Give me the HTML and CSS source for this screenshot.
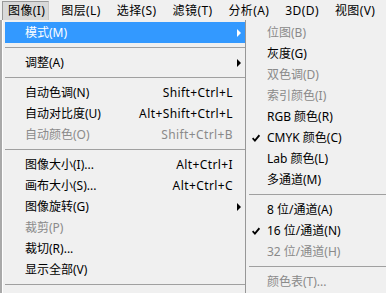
FILE: index.html
```html
<!DOCTYPE html>
<html>
<head>
<meta charset="utf-8">
<link rel="stylesheet" href="styles.css">
</head>
<body>
<div class="menubar">
  <span class="mb-item active">图像(I)</span>
  <span class="mb-item">图层(L)</span>
  <span class="mb-item">选择(S)</span>
  <span class="mb-item">滤镜(T)</span>
  <span class="mb-item">分析(A)</span>
  <span class="mb-item">3D(D)</span>
  <span class="mb-item">视图(V)</span>
</div>
<div class="area">
  <div class="edge"></div>
  <div class="menu main">
    <div class="row hl"><span class="label">模式(M)</span><span class="arrow"></span></div>
    <div class="sep"></div>
    <div class="row"><span class="label">调整(A)</span><span class="arrow"></span></div>
    <div class="sep"></div>
    <div class="row"><span class="label">自动色调(N)</span><span class="key">Shift+Ctrl+L</span></div>
    <div class="row"><span class="label">自动对比度(U)</span><span class="key">Alt+Shift+Ctrl+L</span></div>
    <div class="row dis"><span class="label">自动颜色(O)</span><span class="key">Shift+Ctrl+B</span></div>
    <div class="sep"></div>
    <div class="row"><span class="label">图像大小(I)...</span><span class="key">Alt+Ctrl+I</span></div>
    <div class="row"><span class="label">画布大小(S)...</span><span class="key">Alt+Ctrl+C</span></div>
    <div class="row"><span class="label">图像旋转(G)</span><span class="arrow"></span></div>
    <div class="row dis"><span class="label">裁剪(P)</span></div>
    <div class="row"><span class="label">裁切(R)...</span></div>
    <div class="row"><span class="label">显示全部(V)</span></div>
    <div class="sep"></div>
  </div>
  <div class="menu sub">
    <div class="row dis"><span class="chk"></span><span class="label">位图(B)</span></div>
    <div class="row"><span class="chk"></span><span class="label">灰度(G)</span></div>
    <div class="row dis"><span class="chk"></span><span class="label">双色调(D)</span></div>
    <div class="row dis"><span class="chk"></span><span class="label">索引颜色(I)</span></div>
    <div class="row"><span class="chk"></span><span class="label">RGB 颜色(R)</span></div>
    <div class="row"><span class="chk"><svg width="8" height="8" viewBox="0 0 8 8"><path d="M0.6 4.2 L2.9 6.6 L7.4 1.2" fill="none" stroke="#000" stroke-width="1.8"/></svg></span><span class="label">CMYK 颜色(C)</span></div>
    <div class="row"><span class="chk"></span><span class="label">Lab 颜色(L)</span></div>
    <div class="row"><span class="chk"></span><span class="label">多通道(M)</span></div>
    <div class="sep"></div>
    <div class="row"><span class="chk"></span><span class="label">8 位/通道(A)</span></div>
    <div class="row"><span class="chk"><svg width="8" height="8" viewBox="0 0 8 8"><path d="M0.6 4.2 L2.9 6.6 L7.4 1.2" fill="none" stroke="#000" stroke-width="1.8"/></svg></span><span class="label">16 位/通道(N)</span></div>
    <div class="row dis"><span class="chk"></span><span class="label">32 位/通道(H)</span></div>
    <div class="sep"></div>
    <div class="row dis"><span class="chk"></span><span class="label">颜色表(T)...</span></div>
  </div>
</div>
</body>
</html>
```

FILE: styles.css
```css
html, body {
  margin: 0;
  padding: 0;
  background: #f0f0f0;
  overflow: hidden;
}
body {
  width: 386px;
  height: 293px;
  font-family: "Noto Sans", "Noto Sans CJK SC", sans-serif;
  font-size: 12px;
  color: #000;
}
.menubar {
  display: flex;
  height: 20px;
  padding-left: 2px;
  background: #f0f0f0;
  box-sizing: border-box;
}
.mb-item {
  padding: 0 3px 0 5px;
  margin-right: 6px;
  line-height: 18px;
  height: 18px;
  margin-top: 1px;
  border: 1px solid transparent;
  white-space: nowrap;
  letter-spacing: 0.4px;
}
.mb-item.active {
  background: #d9d9d9;
  border-color: #9a9a9a #c8c8c8 #c8c8c8 #9a9a9a;
}
.area {
  display: flex;
  height: 273px;
}
.edge {
  width: 2px;
  background: #a9a9a9;
}
.menu {
  background: #f0f0f0;
  padding-top: 2px;
}
.main {
  width: 240px;
  border-left: 1px solid #ffffff;
  padding-left: 2px;
}
.sub {
  flex: 1;
  border-left: 1px solid #979797;
}
.row {
  display: flex;
  align-items: center;
  height: 21px;
  line-height: 21px;
  white-space: nowrap;
}
.main .row {
  padding-left: 20px;
  padding-right: 12px;
}
.row.hl {
  background: #3399ff;
  color: #fff;
}
.row.dis {
  color: #8a8a8a;
}
.key {
  margin-left: auto;
  letter-spacing: 0.4px;
}
.arrow {
  margin-left: auto;
  margin-right: -8px;
  width: 0;
  height: 0;
  border-top: 4px solid transparent;
  border-bottom: 4px solid transparent;
  border-left: 4px solid #000;
}
.row.hl .arrow {
  border-left-color: #fff;
}
.sep {
  height: 9px;
  box-sizing: border-box;
  padding-top: 4px;
}
.sep::before {
  content: "";
  display: block;
  height: 1px;
  background: #a0a0a0;
}
.sub .sep {
  margin-left: 3px;
}
.chk {
  width: 21px;
  height: 21px;
  display: flex;
  align-items: center;
  padding-left: 6px;
  box-sizing: border-box;
}
```
